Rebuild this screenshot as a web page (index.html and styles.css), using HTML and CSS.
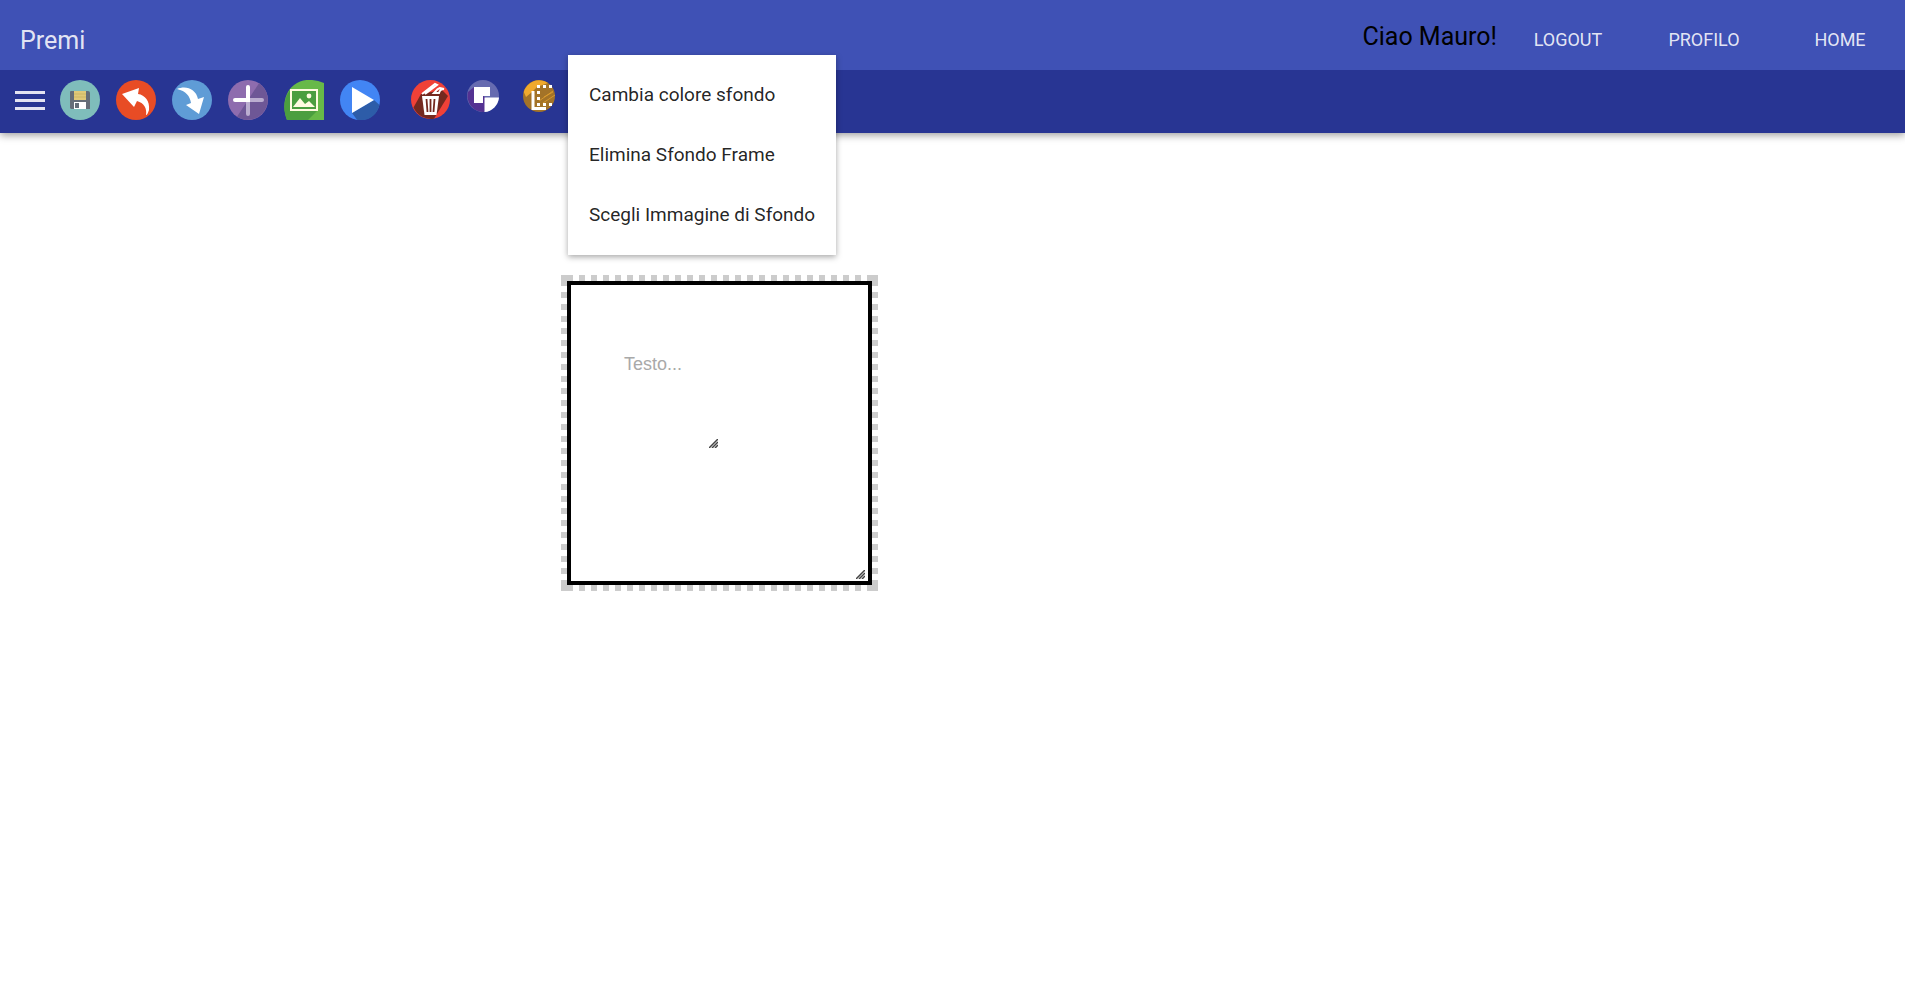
FILE: index.html
```html
<!DOCTYPE html>
<html lang="it">
<head>
<meta charset="utf-8">
<meta name="viewport" content="width=device-width, initial-scale=1">
<title>Premi</title>
<link rel="stylesheet" href="styles.css">
</head>
<body>
<header class="app-header">
  <div class="title-bar">
    <h1 class="brand">Premi</h1>
    <nav class="account">
      <span class="greeting">Ciao Mauro!</span>
      <a class="nav-link" href="#logout">Logout</a>
      <a class="nav-link" href="#profilo">Profilo</a>
      <a class="nav-link" href="#home">Home</a>
    </nav>
  </div>
  <div class="toolbar">
    <button class="tool menu-toggle" aria-label="Menu">
      <svg width="30" height="20" viewBox="0 0 30 20" fill="#e3e3f2"><path d="M0 1h30v3H0zM0 9h30v3H0zM0 17h30v3H0z"/></svg>
    </button>
    <div class="tool-group">
      <button class="tool" aria-label="Salva">
        <svg width="40" height="40" viewBox="0 0 40 40"><circle cx="20" cy="20" r="20" fill="#7fbdbb"/><path d="M10 12q0-1 1-1h17q2 0 2 2v16h-19l-1-1z" fill="#656d78"/><path d="M14 11h12v9H14z" fill="#e0c978"/><path d="M14 14h12M14 17h12" stroke="#cdb665"/><path d="M14 22h12v7H14z" fill="#fff"/><path d="M15 23h4v5h-4z" fill="#656d78"/></svg>
      </button>
      <button class="tool" aria-label="Annulla">
        <svg width="40" height="40" viewBox="0 0 40 40"><circle cx="20" cy="20" r="20" fill="#e84c25"/><path d="M6 14 23 8l-1 6c7 1 12 7 11 16-1 3-2 5-3 5 1-7-2-12-9-14l-3 6z" fill="#fff"/></svg>
      </button>
      <button class="tool" aria-label="Ripristina">
        <svg width="40" height="40" viewBox="0 0 40 40"><circle cx="20" cy="20" r="20" fill="#5f9cd6"/><path d="M5 9c9-4 19 0 21 10l6-2-5 17-13-9 5-2c-1-7-5-12-14-14z" fill="#fff"/></svg>
      </button>
      <button class="tool" aria-label="Aggiungi">
        <svg width="40" height="40" viewBox="0 0 40 40"><circle cx="20" cy="20" r="20" fill="#8e6cae"/><path d="M31 3.300A20 20 0 0 1 9 36.700z" fill="#6e5796"/><path d="M20 22v12M22 20h12" stroke="#bbaed0" stroke-width="4" stroke-linecap="round"/><path d="M20 7v13H7" fill="none" stroke="#fff" stroke-width="4" stroke-linecap="round"/></svg>
      </button>
      <button class="tool" aria-label="Inserisci immagine">
        <svg width="40" height="40" viewBox="0 0 40 40"><path d="M40 3v37H3C-2 27 0 13 10 5 19-2 30-1 40 3z" fill="#67b948"/><path d="M34 30 24 40H3C-1 30-1 20 6 10z" fill="#4b9e3f"/><path d="M6 9h28v22H6z" fill="#fffbe0"/><path d="M8 11h24v18H8z" fill="#4b9e3f"/><path d="m9 27 7-9 5 6 4-3 6 6z" fill="#fffbe0"/><circle cx="25" cy="16" r="2.400" fill="#fffbe0"/></svg>
      </button>
      <button class="tool" aria-label="Avvia presentazione">
        <svg width="40" height="40" viewBox="0 0 40 40"><circle cx="20" cy="20" r="20" fill="#4285f4"/><path d="m34 20 5.500 5C37 36 27 42 17 39.700L12 33z" fill="#2d5ca8"/><path d="M12 7v26l22-13z" fill="#fff"/></svg>
      </button>
    </div>
    <div class="tool-group frame-tools">
      <button class="tool" aria-label="Elimina frame">
        <svg width="39" height="39" viewBox="0 0 39 39"><circle cx="19.500" cy="19.500" r="19.500" fill="#f04137"/><path d="M10 14 2.500 27.500A19.500 19.500 0 0 0 23 38.700L37 16 31 10z" fill="#74291f"/><path d="M11 16h17l-2.500 19h-12z" fill="#fff"/><path d="m15.500 19 1 13M19.500 19v13M23.500 19l-1 13" stroke="#74291f" stroke-width="1.800"/><path d="M11 14 24 4l2 1-8 6M14 14l8-6M23 13l2-2q1-2 4-3l4 1q-4 0-5 4z" fill="none" stroke="#fff" stroke-width="2"/></svg>
      </button>
      <button class="tool" aria-label="Ordina livelli">
        <svg width="32" height="32" viewBox="0 0 32 32"><circle cx="16" cy="16" r="16" fill="#666bb0"/><path d="M7 7 1 12a16 16 0 0 0 16 20l8-8z" fill="#543292"/><path d="M7 7h16v9h-7v7H7z" fill="#fff"/><path d="M17.500 17.500H32A16 16 0 0 1 17.500 32z" fill="#fff"/></svg>
      </button>
      <div class="menu-anchor">
        <button class="tool" aria-label="Sfondo" aria-haspopup="menu" aria-expanded="true">
          <svg width="32" height="32" viewBox="0 0 32 32"><circle cx="16" cy="16" r="16" fill="#a37328"/><path d="M.8 12A16 16 0 0 1 25 3L14 7 9 12 3 17z" fill="#f0a92d"/><path d="M16 21 30 11M20 23l12-8M21 17l9-5" stroke="#e1a02e" stroke-width=".8"/><path d="M10 11v17.500h13" fill="none" stroke="#fff" stroke-width="3"/><path d="M14 5h3v3h-3zM20 5h3v3h-3zM26 5h3v3h-3zM14 11h3v3h-3zM14 17h3v3h-3zM14 23h3v3h-3zM20 23h3v3h-3zM26 23h3v3h-3z" fill="#fff"/></svg>
        </button>
        <div class="menu" role="menu">
          <button class="menu-item" role="menuitem">Cambia colore sfondo</button>
          <button class="menu-item" role="menuitem">Elimina Sfondo Frame</button>
          <button class="menu-item" role="menuitem">Scegli Immagine di Sfondo</button>
        </div>
      </div>
    </div>
  </div>
</header>
<main class="canvas">
  <div class="selection">
    <div class="frame">
      <div class="text-box">
        <textarea class="text-input" aria-label="Testo" placeholder="Testo..."></textarea>
        <svg class="grip" width="9" height="9" viewBox="0 0 9 9"><path d="M0 9 9 0M3 9l6-6M6 9l3-3" stroke="#444" stroke-width="1.500"/></svg>
      </div>
      <svg class="grip" width="9" height="9" viewBox="0 0 9 9"><path d="M0 9 9 0M3 9l6-6M6 9l3-3" stroke="#444" stroke-width="1.500"/></svg>
    </div>
  </div>
</main>
</body>
</html>
```

FILE: styles.css
```css
* {
  box-sizing: border-box;
}

body {
  margin: 0;
  min-height: 100vh;
  display: flex;
  flex-direction: column;
  background: #fff;
  font-family: Roboto, "Liberation Sans", sans-serif;
}

button {
  border: 0;
  padding: 0;
  background: none;
  font: inherit;
  color: inherit;
  cursor: pointer;
}

.app-header {
  position: relative;
  z-index: 1;
  box-shadow: 0 2px 8px rgba(0, 0, 0, 0.4);
}

.title-bar {
  display: flex;
  justify-content: space-between;
  height: 70px;
  padding: 0 10px 0 20px;
  background: #3f51b5;
  color: rgba(255, 255, 255, 0.87);
}

.brand {
  margin: 0;
  padding-top: 10px;
  font-size: 25px;
  font-weight: 400;
  line-height: 62px;
}

.account {
  display: flex;
  gap: 26px;
  line-height: 60px;
}

.greeting {
  padding-top: 6px;
  margin-right: -10px;
  font-size: 25px;
  line-height: 62px;
  color: #000;
}

.nav-link {
  min-width: 110px;
  padding-top: 10px;
  font-size: 18px;
  text-align: center;
  text-transform: uppercase;
  text-decoration: none;
  color: inherit;
}

.toolbar {
  display: flex;
  align-items: flex-start;
  height: 63px;
  padding: 10px 15px;
  background: #283593;
}

.tool,
.tool svg {
  display: block;
}

.menu-toggle {
  height: 40px;
  margin-right: 15px;
}

.tool-group {
  display: flex;
  align-items: flex-start;
  gap: 16px;
}

.frame-tools {
  margin-left: 31px;
  gap: 17px;
}

.frame-tools .menu-anchor {
  margin-left: 7px;
}

.menu-anchor {
  position: relative;
}

.menu {
  position: absolute;
  top: -25px;
  left: 45px;
  padding: 9px 0 11px;
  background: #fff;
  box-shadow: 0 2px 6px rgba(0, 0, 0, 0.35);
}

.menu-item {
  display: block;
  width: 100%;
  height: 60px;
  padding: 0 21px;
  font-size: 19px;
  text-align: left;
  white-space: nowrap;
  color: rgba(0, 0, 0, 0.87);
}

.canvas {
  position: relative;
  flex: 1;
  min-height: 480px;
}

/* Dotted marquee: solid corners plus a 12px dot pattern along each edge */
.selection {
  --dot: linear-gradient(#ccc, #ccc);
  --dots-x: linear-gradient(90deg, #ccc 50%, transparent 50%);
  --dots-y: linear-gradient(#ccc 50%, transparent 50%);
  position: absolute;
  top: 142px;
  left: 561px;
  width: 317px;
  height: 316px;
  padding: 6px;
  background:
    var(--dot) 0 0 / 6px 6px no-repeat,
    var(--dot) 100% 0 / 6px 6px no-repeat,
    var(--dot) 0 100% / 6px 6px no-repeat,
    var(--dot) 100% 100% / 6px 6px no-repeat,
    var(--dots-x) 6px 0 / 12px 6px repeat-x,
    var(--dots-x) 6px 100% / 12px 6px repeat-x,
    var(--dots-y) 0 5px / 6px 12px repeat-y,
    var(--dots-y) 100% 5px / 6px 12px repeat-y;
}

.frame {
  position: relative;
  height: 100%;
  padding: 66px 50px;
  border: 4px solid #000;
  background: #fff;
}

.text-box {
  position: relative;
  width: 100px;
  height: 99px;
}

.text-input {
  display: block;
  width: 100%;
  height: 100%;
  padding: 3px;
  border: 0;
  background: none;
  font: 18px/20px "Liberation Sans", Arial, sans-serif;
  resize: none;
}

.text-input::placeholder {
  color: #a9a9a9;
}

.grip {
  position: absolute;
  right: 3px;
  bottom: 2px;
}
```
